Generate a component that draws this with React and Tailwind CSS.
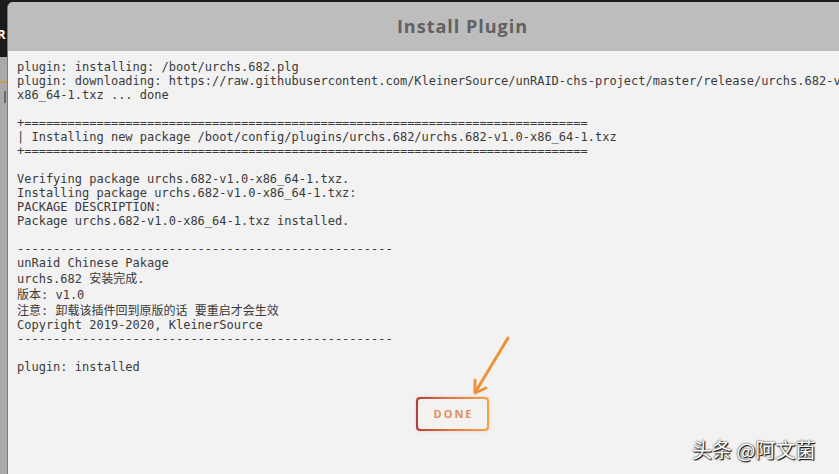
import React from "react";

const mono = { fontFamily: '"DejaVu Sans Mono", "Noto Sans CJK SC", monospace' };

const lines = [
  { t: "plugin: installing: /boot/urchs.682.plg" },
  { t: "plugin: downloading: https://raw.githubusercontent.com/KleinerSource/unRAID-chs-project/master/release/urchs.682-v1.0-" },
  { t: "x86_64-1.txz ... done" },
  { t: "" },
  { t: "+" + "=".repeat(78) },
  { t: "| Installing new package /boot/config/plugins/urchs.682/urchs.682-v1.0-x86_64-1.txz" },
  { t: "+" + "=".repeat(78) },
  { t: "" },
  { t: "Verifying package urchs.682-v1.0-x86_64-1.txz." },
  { t: "Installing package urchs.682-v1.0-x86_64-1.txz:" },
  { t: "PACKAGE DESCRIPTION:" },
  { t: "Package urchs.682-v1.0-x86_64-1.txz installed." },
  { t: "" },
  { t: "-".repeat(52) },
  { t: "unRaid Chinese Pakage" },
  { t: "urchs.682 安装完成.", cjk: true },
  { t: "版本: v1.0", cjk: true },
  { t: "注意: 卸载该插件回到原版的话 要重启才会生效", cjk: true },
  { t: "Copyright 2019-2020, KleinerSource" },
  { t: "-".repeat(52) },
  { t: "" },
  { t: "plugin: installed" },
];

export default function App() {
  return (
    <div className="relative w-[839px] h-[474px] overflow-hidden bg-[#1c1c1c] flex">
      {/* left background strip */}
      <div className="w-[7px] shrink-0 flex flex-col">
        <div className="h-[57px] bg-[#1a1a1a] flex items-center overflow-hidden">
          <span className="text-white text-[13px] font-bold -ml-[3px] mt-[12px]" style={{ fontFamily: '"Open Sans", sans-serif' }}>R</span>
        </div>
        <div className="flex-1 bg-[#a9a9a9] flex flex-col">
          <div className="h-[24px]" />
          <div className="h-[2px] bg-[#c89a5a]" />
          <div className="h-[8px]" />
          <div className="h-[12px] w-[2px] ml-[4px] bg-[#6b6b6b]" />
        </div>
      </div>

      {/* dialog */}
      <div className="w-[910px] shrink-0 mt-[2px] rounded-tl-[6px] overflow-hidden flex flex-col bg-[#f2f2f2] border-l border-[#7a7a7a]">
        <div className="h-[49px] shrink-0 bg-[#bdbdbd] flex items-center justify-center">
          <span
            className="text-[18px] font-bold tracking-[1px] text-[#616161]"
            style={{ fontFamily: '"Open Sans", sans-serif' }}
          >
            Install Plugin
          </span>
        </div>
        <div className="flex-1 pl-[9px] pt-[9px] text-[12px] text-[#3a3a3a]" style={mono}>
          {lines.map((l, i) => (
            <div
              key={i}
              className={
                "whitespace-pre " + (l.cjk ? "h-[16px] leading-[16px] pt-[1px]" : "h-[14px] leading-[14px]")
              }
            >
              {l.t}
            </div>
          ))}
          <div className="mt-[23px] ml-[399px] w-[73px] h-[34px] rounded-[4px] p-[2px] bg-gradient-to-r from-[#b0403c] via-[#e07a45] to-[#f2a24a] shadow-[0_0_3px_rgba(220,120,80,0.35)]">
            <div className="w-full h-full rounded-[3px] bg-[#f4f2f1] flex items-center justify-center">
              <span
                className="text-[11px] font-bold tracking-[2px] text-[#df8f62] pl-[2px]"
                style={{ fontFamily: '"Open Sans", sans-serif' }}
              >
                DONE
              </span>
            </div>
          </div>
        </div>
      </div>

      {/* annotation arrow */}
      <svg className="absolute left-0 top-0 pointer-events-none" width="839" height="474">
        <line x1="508" y1="338" x2="476" y2="391" stroke="#f0903a" strokeWidth="3" strokeLinecap="round" />
        <polyline points="475,380 475,393 486,388" fill="none" stroke="#f0903a" strokeWidth="3" strokeLinecap="round" strokeLinejoin="round" />
      </svg>

      {/* watermark */}
      <div
        className="absolute left-[692px] top-[436px] text-white text-[20px] leading-[28px] [text-shadow:0_0_2px_#000,1px_1px_1px_#000]"
        style={{ fontFamily: '"Noto Sans CJK SC", sans-serif' }}
      >
        头条 @阿文菌
      </div>
    </div>
  );
}
